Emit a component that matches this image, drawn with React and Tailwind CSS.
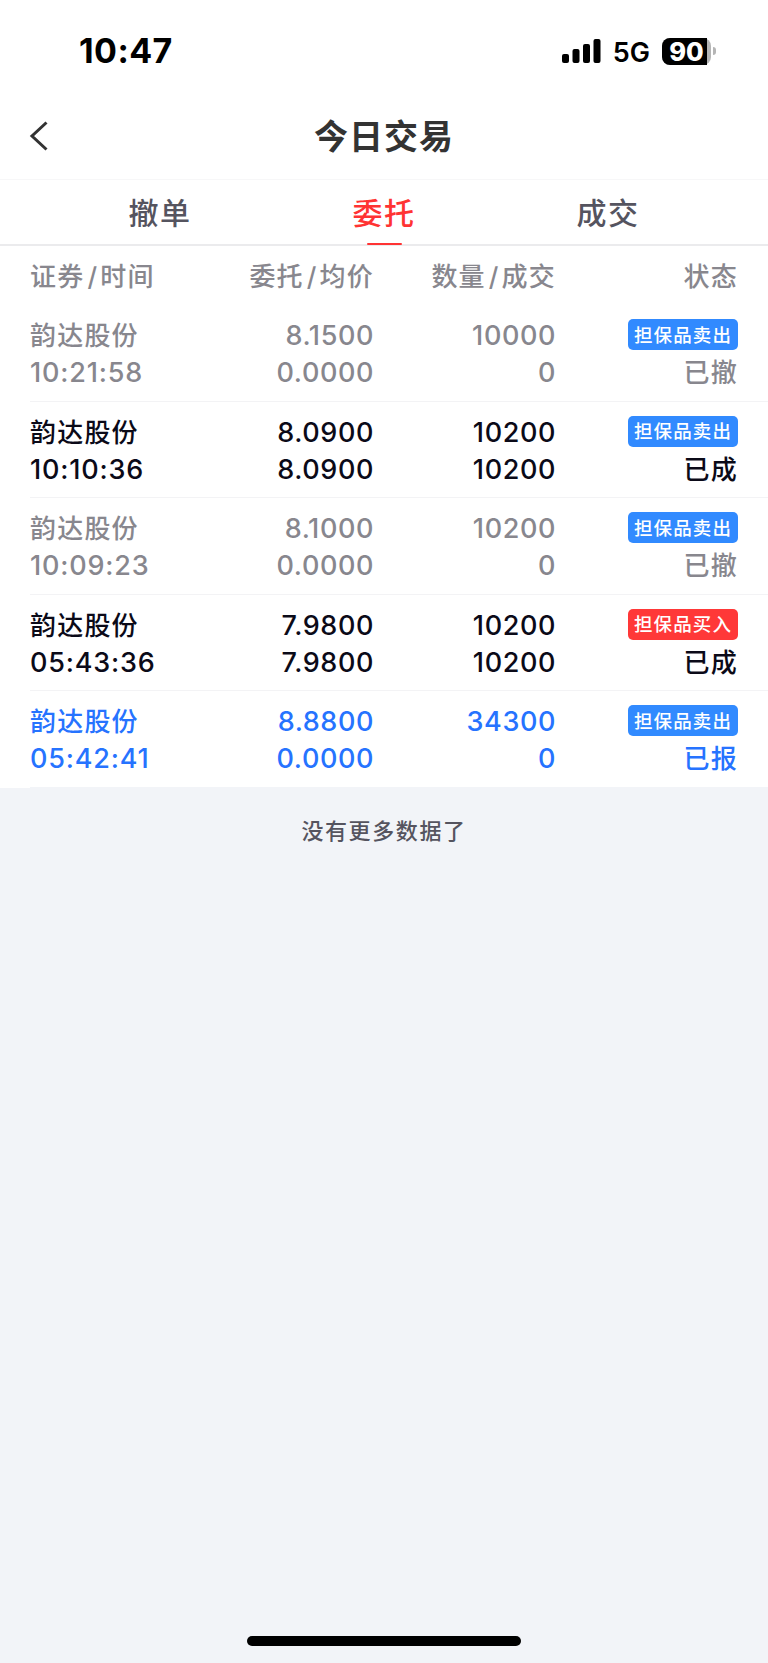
import React from 'react';
import clsx from 'clsx';

const tabs = ['撤单', '委托', '成交'];

const orders = [
    { name: '韵达股份', time: '10:21:58', price: '8.1500', avg: '0.0000', qty: '10000', filled: '0', side: 'sell', status: '已撤' },
    { name: '韵达股份', time: '10:10:36', price: '8.0900', avg: '8.0900', qty: '10200', filled: '10200', side: 'sell', status: '已成' },
    { name: '韵达股份', time: '10:09:23', price: '8.1000', avg: '0.0000', qty: '10200', filled: '0', side: 'sell', status: '已撤' },
    { name: '韵达股份', time: '05:43:36', price: '7.9800', avg: '7.9800', qty: '10200', filled: '10200', side: 'buy', status: '已成' },
    { name: '韵达股份', time: '05:42:41', price: '8.8800', avg: '0.0000', qty: '34300', filled: '0', side: 'sell', status: '已报' },
];

const statusColors = {
    已撤: 'text-[#88878e]',
    已成: 'text-[#0b0a18]',
    已报: 'text-[#2673ff]',
};

const StatusBar = () => (
    <div className="flex h-[102px] items-center justify-between pl-[79px] pr-[52px] text-black">
        <span className="text-[34px] font-bold leading-none tracking-[0.4px]">10:47</span>
        <div className="flex items-center">
            <svg width="39" height="24" viewBox="0 0 39 24" fill="currentColor">
                <rect x="0" y="15" width="7" height="9" rx="2" />
                <rect x="10.5" y="10" width="7" height="14" rx="2" />
                <rect x="21" y="5" width="7" height="19" rx="2" />
                <rect x="31.5" y="0" width="7" height="24" rx="2" />
            </svg>
            <span className="ml-[12px] pt-[2px] text-[27px] font-semibold leading-none">5G</span>
            <div className="ml-[12px] flex items-center">
                <div className="flex h-[27px] w-[49px] rounded-[8px] bg-[#b5b5b5]">
                    <div className="flex w-[45px] items-center justify-center rounded-l-[8px] bg-black pl-[4px] text-[25.5px] font-extrabold leading-[27px] text-white">
                        90
                    </div>
                </div>
                <div className="ml-[2px] h-[8px] w-[3px] rounded-r-full bg-[#b5b5b5]" />
            </div>
        </div>
    </div>
);

const OrderRow = ({ order, last }) => (
    <div className="pl-[30px]">
        <div
            className={clsx(
                'grid h-[96.5px] grid-cols-[160px_184px_182px_182px] border-b pt-[12px] text-[27px] font-[550] leading-[37px] tracking-[0.6px]',
                last ? 'border-[#f2f4f8]' : 'border-[#f3f3f5]',
                statusColors[order.status]
            )}
        >
            <div>
                <div className="text-[26px] font-medium tracking-[1.2px]">{order.name}</div>
                <div className="tracking-[0.8px]">{order.time}</div>
            </div>
            <div className="text-right">
                <div>{order.price}</div>
                <div>{order.avg}</div>
            </div>
            <div className="text-right">
                <div>{order.qty}</div>
                <div>{order.filled}</div>
            </div>
            <div className="flex flex-col items-end">
                <div className="-mt-[1px] mb-[1px] flex h-[37px] items-center">
                    <span
                        className={clsx(
                            'flex h-[31px] w-[110px] items-center justify-center rounded-[5px] pt-[1px] text-[18.5px] font-medium leading-none tracking-[1.1px] text-white',
                            order.side === 'buy' ? 'bg-[#ff3838]' : 'bg-[#318aff]'
                        )}
                    >
                        {order.side === 'buy' ? '担保品买入' : '担保品卖出'}
                    </span>
                </div>
                <div className="text-[26px] font-medium tracking-[1.2px]">{order.status}</div>
            </div>
        </div>
    </div>
);

const App = () => {
    return (
        <div className="flex h-[1663px] w-[768px] flex-col overflow-hidden bg-[#f2f4f8] font-[Inter,'Noto_Sans_CJK_SC',sans-serif]">
            <div className="bg-white">
                <StatusBar />

                <div className="grid h-[78px] grid-cols-[1fr_auto_1fr] items-center border-b border-[#f7f7f8] pb-[9px] text-[#333]">
                    <svg className="ml-[29px]" width="20" height="30" viewBox="0 0 20 30" fill="none" stroke="currentColor" strokeWidth="3">
                        <path d="M17.5 1.5 3 15l14.5 13.5" />
                    </svg>
                    <h1 className="pt-[2px] text-[34px] font-bold leading-none tracking-[1px]">今日交易</h1>
                </div>

                <div className="flex h-[66px] justify-center border-b-2 border-[#ebebed]">
                    {tabs.map((tab) => (
                        <div
                            key={tab}
                            className={clsx(
                                'flex w-[224px] flex-col items-center justify-between text-[30px] font-medium tracking-[1.6px]',
                                tab === '委托' ? 'text-[#ff3333]' : 'text-[#55545f]'
                            )}
                        >
                            <span className="pt-[2px] leading-[62px]">{tab}</span>
                            {tab === '委托' && <div className="-mb-[1px] -mt-[2px] h-[2px] w-[35px] shrink-0 rounded-full bg-[#ff3333]" />}
                        </div>
                    ))}
                </div>

                <div className="grid h-[59px] grid-cols-[160px_184px_182px_182px] pl-[30px] pt-[1px] text-[26px] font-medium leading-[59px] tracking-[1.2px] text-[#88878e]">
                    <span>证券<span className="pl-[3px] pr-[2px]">/</span>时间</span>
                    <span className="text-right">委托<span className="pl-[3px] pr-[2px]">/</span>均价</span>
                    <span className="text-right">数量<span className="pl-[3px] pr-[2px]">/</span>成交</span>
                    <span className="text-right">状态</span>
                </div>

                {orders.map((order, i) => (
                    <OrderRow key={order.time} order={order} last={i === orders.length - 1} />
                ))}
            </div>

            <p className="pt-[27px] text-center text-[22px] font-medium leading-[32px] tracking-[1.6px] text-[#55545f]">没有更多数据了</p>

            {/* Home indicator */}
            <div className="mx-auto mb-[17px] mt-auto h-[10px] w-[274px] rounded-full bg-black" />
        </div>
    );
};

export default App;
